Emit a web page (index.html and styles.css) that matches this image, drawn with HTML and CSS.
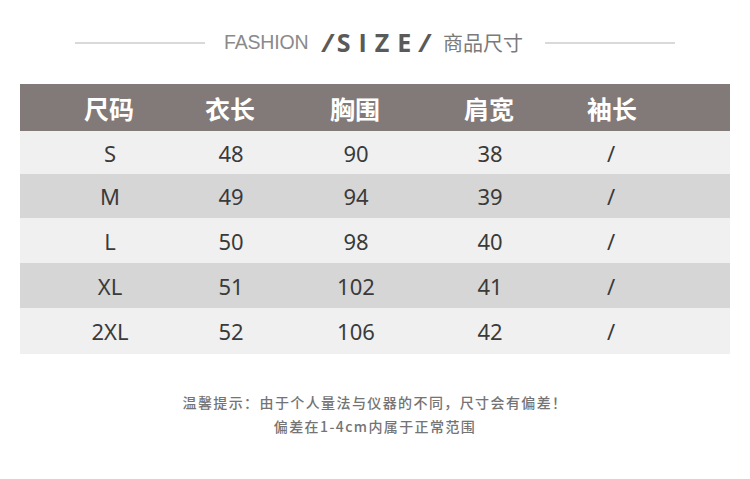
FILE: index.html
```html
<!DOCTYPE html>
<html lang="zh-CN">
<head>
<meta charset="utf-8">
<title>SIZE 商品尺寸</title>
<link rel="stylesheet" href="styles.css">
</head>
<body>
<div class="page">
  <div class="title">
    <span class="rule"></span>
    <span class="fashion">FASHION</span>
    <span class="size"><span class="slash">/</span>SIZE<span class="slash">/</span></span>
    <span class="cn">商品尺寸</span>
    <span class="rule"></span>
  </div>
  <div class="table">
    <div class="row head">
      <div>尺码</div><div>衣长</div><div>胸围</div><div>肩宽</div><div>袖长</div>
    </div>
    <div class="row light r1"><div>S</div><div>48</div><div>90</div><div>38</div><div>/</div></div>
    <div class="row dark r2"><div>M</div><div>49</div><div>94</div><div>39</div><div>/</div></div>
    <div class="row light r3"><div>L</div><div>50</div><div>98</div><div>40</div><div>/</div></div>
    <div class="row dark r4"><div>XL</div><div>51</div><div>102</div><div>41</div><div>/</div></div>
    <div class="row light r5"><div>2XL</div><div>52</div><div>106</div><div>42</div><div>/</div></div>
  </div>
  <div class="note">
    <p>温馨提示：由于个人量法与仪器的不同，尺寸会有偏差！</p>
    <p>偏差在1-4cm内属于正常范围</p>
  </div>
</div>
</body>
</html>
```

FILE: styles.css
```css
* { box-sizing: border-box; }
html, body { margin: 0; padding: 0; background: #fff; }
.page { width: 750px; height: 479px; }

.title {
  height: 84px;
  display: flex;
  align-items: center;
  justify-content: center;
  padding-top: 1px;
}
.rule {
  display: block;
  width: 130px;
  height: 2px;
  background: #d9d9d9;
}
.fashion {
  margin-left: 19px;
  font-family: "Liberation Sans", Arial, sans-serif;
  font-size: 19.5px;
  color: #8a8a8a;
  letter-spacing: -0.2px;
}
.size {
  margin-left: 14px;
  font-family: "Open Sans", "Liberation Sans", sans-serif;
  font-weight: 700;
  font-size: 25px;
  letter-spacing: 8px;
  color: #5a5a5a;
  line-height: 1;
}
.size .slash { font-style: italic; letter-spacing: 4px; }
.cn {
  margin-left: 9px;
  margin-right: 22px;
  font-family: "Noto Sans CJK SC", sans-serif;
  font-size: 20px;
  color: #7a7a7a;
}

.table { margin: 0 20px; }
.row {
  display: grid;
  grid-template-columns: 120px 122px 128px 140px 102px;
  padding-left: 30px;
  align-items: center;
  font-family: "Noto Sans", "Open Sans", sans-serif;
  font-size: 22px;
  color: #3a3a3a;
}
.row > div { text-align: center; }
.head {
  height: 47px;
  background: #817a79;
  color: #fff;
  font-family: "Noto Sans CJK SC", sans-serif;
  font-weight: 700;
  font-size: 25px;
  padding-left: 29px;
}
.head > div:nth-child(5) { padding-left: 4px; }
.r1 { height: 43px; }
.r2 { height: 44px; }
.r3 { height: 45px; }
.r4 { height: 45px; }
.r5 { height: 46px; }
.light { background: #f0f0f0; }
.dark { background: #d6d6d6; }

.note {
  margin-top: 36px;
  text-align: center;
  font-family: "Noto Sans CJK SC", sans-serif;
  font-size: 14px;
  font-weight: 500;
  color: #747474;
  letter-spacing: 1.4px;
}
.note p { margin: 0; line-height: 24px; }
```
